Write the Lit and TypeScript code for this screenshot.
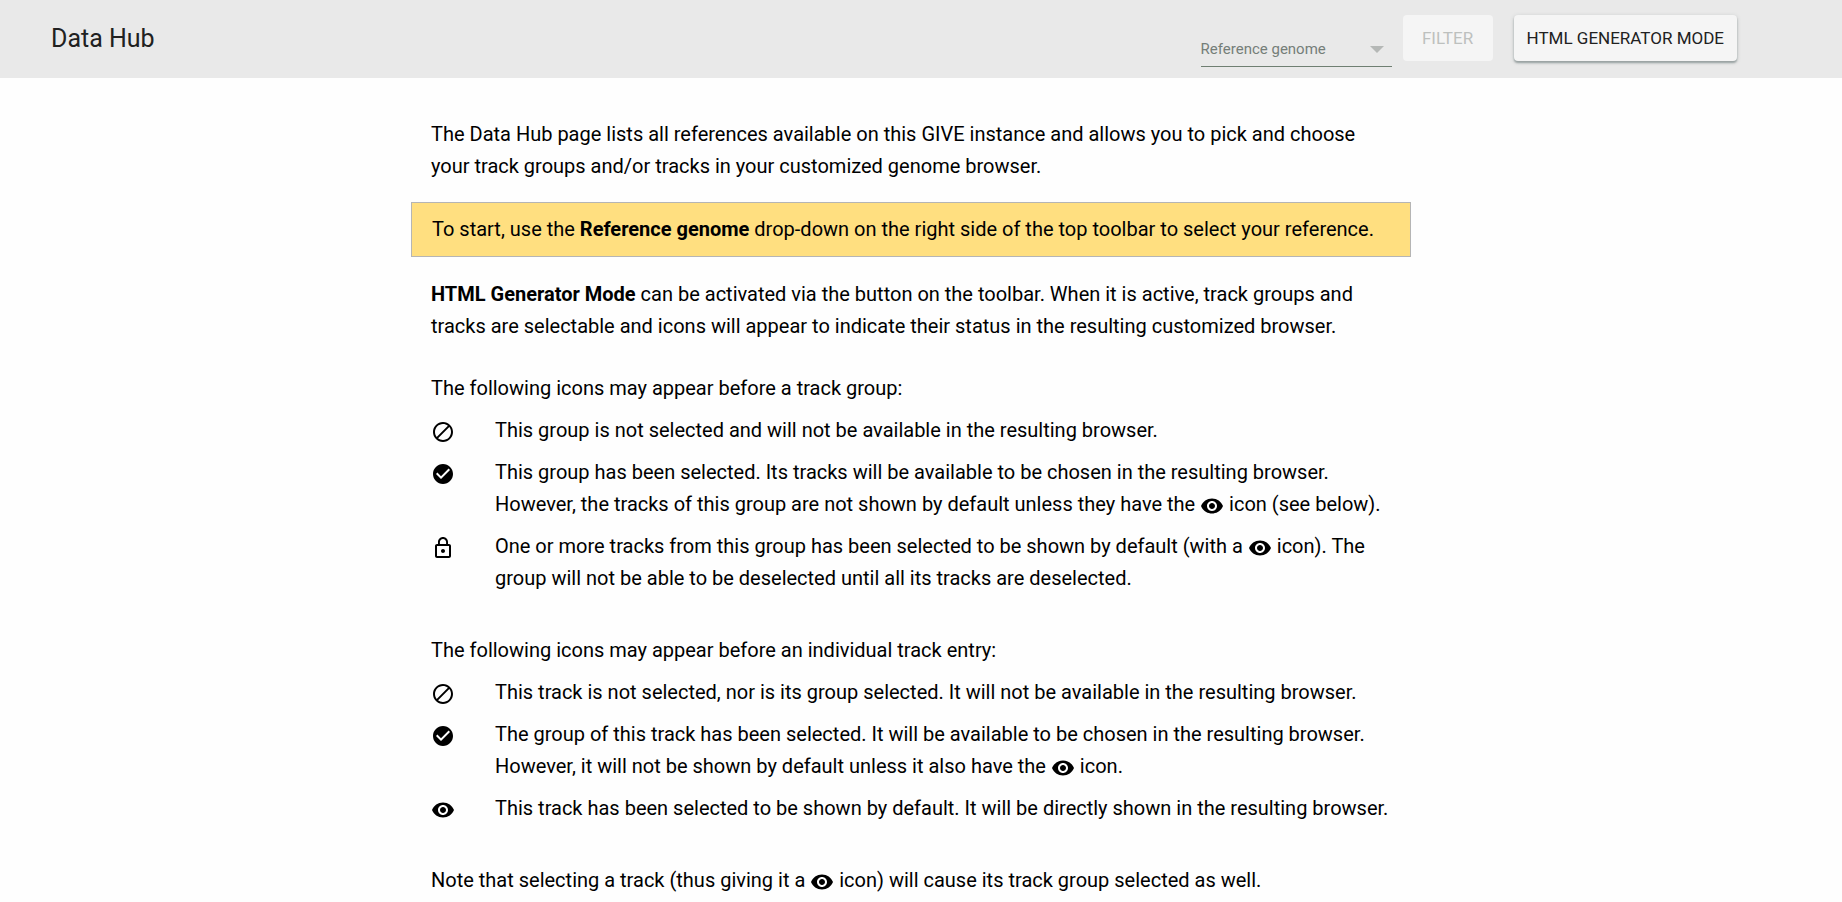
import { LitElement, html, css, svg } from "lit";
import { customElement, property } from "lit/decorators.js";

const ICONS: Record<string, string> = {
  block:
    "M12 2C6.48 2 2 6.48 2 12s4.48 10 10 10 10-4.48 10-10S17.52 2 12 2zM4 12c0-4.42 3.58-8 8-8 1.85 0 3.55.63 4.9 1.69L5.69 16.9C4.63 15.55 4 13.85 4 12zm8 8c-1.85 0-3.55-.63-4.9-1.69L18.31 7.1C19.37 8.45 20 10.15 20 12c0 4.42-3.58 8-8 8z",
  check:
    "M12 2C6.48 2 2 6.48 2 12s4.48 10 10 10 10-4.48 10-10S17.52 2 12 2zm-2 15l-5-5 1.41-1.41L10 14.17l7.59-7.59L19 8l-9 9z",
  lock:
    "M12 17c1.1 0 2-.9 2-2s-.9-2-2-2-2 .9-2 2 .9 2 2 2zm6-9h-1V6c0-2.76-2.24-5-5-5S7 3.24 7 6v2H6c-1.1 0-2 .9-2 2v10c0 1.1.9 2 2 2h12c1.1 0 2-.9 2-2V10c0-1.1-.9-2-2-2zM8.9 6c0-1.71 1.39-3.1 3.1-3.1s3.1 1.39 3.1 3.1v2H8.9V6zM18 20H6V10h12v10z",
  eye:
    "M12 4.5C7 4.5 2.73 7.61 1 12c1.73 4.39 6 7.5 11 7.5s9.27-3.11 11-7.5c-1.73-4.39-6-7.5-11-7.5zM12 17c-2.76 0-5-2.24-5-5s2.24-5 5-5 5 2.24 5 5-2.24 5-5 5zm0-8c-1.66 0-3 1.34-3 3s1.34 3 3 3 3-1.34 3-3-1.34-3-3-3z",
};

@customElement("hub-icon")
export class HubIcon extends LitElement {
  @property() name = "eye";

  static styles = css`
    :host {
      display: inline-block;
      width: 24px;
      height: 24px;
      vertical-align: middle;
    }
    .glyph {
      display: block;
      fill: currentColor;
    }
  `;

  render() {
    return html`<svg class="glyph" viewBox="0 0 24 24" width="24" height="24" aria-hidden="true">
      ${svg`<path d=${ICONS[this.name]}></path>`}
    </svg>`;
  }
}

@customElement("hub-toolbar")
export class HubToolbar extends LitElement {
  static styles = css`
    :host {
      display: block;
    }
    .bar {
      display: flex;
      align-items: center;
      box-sizing: border-box;
      min-height: 78px;
      padding: 0 105px 0 51px;
      background: #e9e9e9;
      color: #212121;
    }
    .title {
      flex: 1;
      margin: 0;
      font-size: 25px;
      font-weight: 400;
      line-height: 32px;
    }
    .picker {
      display: grid;
      align-self: flex-end;
      align-items: center;
      width: 191px;
      margin: 0 11px 11px 0;
      border-bottom: 1px solid #6f7f72;
    }
    .picker > * {
      grid-area: 1 / 1;
    }
    .select {
      appearance: none;
      width: 100%;
      height: 34px;
      padding: 0 30px 0 0;
      border: 0;
      background: transparent;
      color: inherit;
      font: inherit;
      font-size: 15px;
    }
    .label {
      color: #757e79;
      font-size: 15px;
      line-height: 20px;
      pointer-events: none;
    }
    .arrow {
      justify-self: end;
      margin-right: 8px;
      fill: #b5b8b6;
      pointer-events: none;
    }
    .actions {
      display: flex;
      gap: 21px;
      padding-bottom: 2px;
    }
    .button {
      height: 46px;
      padding: 0 13px;
      border: 0;
      border-radius: 4px;
      background: #f5f5f5;
      color: #212121;
      font: inherit;
      font-size: 17px;
      text-transform: uppercase;
      box-shadow: 0 2px 2px #9aa3a3, 0 1px 4px #c4c8c8;
    }
    .button:disabled {
      min-width: 90px;
      color: #bdc0be;
      box-shadow: none;
    }
  `;

  render() {
    return html`
      <header class="bar">
        <h1 class="title">Data Hub</h1>
        <div class="picker">
          <select class="select" id="genome">
            <option value=""></option>
          </select>
          <label class="label" for="genome">Reference genome</label>
          <svg class="arrow" width="14" height="7" viewBox="0 0 14 7" aria-hidden="true">
            <path d="M0 0h14L7 7z"></path>
          </svg>
        </div>
        <div class="actions">
          <button class="button" type="button" disabled>Filter</button>
          <button class="button" type="button">HTML Generator Mode</button>
        </div>
      </header>
    `;
  }
}

@customElement("app-root")
export class AppRoot extends LitElement {
  static styles = css`
    :host {
      display: block;
      min-height: 100vh;
      background: #fefefe;
      color: #000;
      font-family: Roboto, "Liberation Sans", sans-serif;
      font-size: 20px;
      line-height: 32px;
    }
    .content {
      display: flex;
      flex-direction: column;
      gap: 20px;
      max-width: 1000px;
      margin: 0 auto;
      padding: 40px 20px 0 0;
    }
    .text {
      margin: 0;
      padding: 0 20px;
    }
    .notice {
      margin: 0 0 1px;
      padding: 10px 20px 11px;
      border: 1px solid #b5b5b5;
      background: #ffdf80;
    }
    .legend {
      display: flex;
      flex-direction: column;
      gap: 10px;
      padding: 10px 20px;
    }
    .lead {
      margin: 0;
    }
    .items {
      display: grid;
      grid-template-columns: 64px 1fr;
      row-gap: 10px;
      margin: 0;
    }
    .items dd {
      margin: 0;
    }
    .note {
      padding-top: 10px;
    }
  `;

  render() {
    const eye = html`<hub-icon name="eye"></hub-icon>`;
    return html`
      <hub-toolbar></hub-toolbar>
      <main class="content">
        <p class="text">
          The Data Hub page lists all references available on this GIVE instance and allows you to
          pick and choose your track groups and/or tracks in your customized genome browser.
        </p>
        <p class="notice">
          To start, use the <b>Reference genome</b> drop-down on the right side of the top toolbar
          to select your reference.
        </p>
        <p class="text">
          <b>HTML Generator Mode</b> can be activated via the button on the toolbar. When it is
          active, track groups and tracks are selectable and icons will appear to indicate their
          status in the resulting customized browser.
        </p>
        <section class="legend">
          <p class="lead">The following icons may appear before a track group:</p>
          <dl class="items">
            <dt><hub-icon name="block"></hub-icon></dt>
            <dd>This group is not selected and will not be available in the resulting browser.</dd>
            <dt><hub-icon name="check"></hub-icon></dt>
            <dd>
              This group has been selected. Its tracks will be available to be chosen in the
              resulting browser. However, the tracks of this group are not shown by default unless
              they have the ${eye} icon (see below).
            </dd>
            <dt><hub-icon name="lock"></hub-icon></dt>
            <dd>
              One or more tracks from this group has been selected to be shown by default (with a
              ${eye} icon). The group will not be able to be deselected until all its tracks are
              deselected.
            </dd>
          </dl>
        </section>
        <section class="legend">
          <p class="lead">The following icons may appear before an individual track entry:</p>
          <dl class="items">
            <dt><hub-icon name="block"></hub-icon></dt>
            <dd>
              This track is not selected, nor is its group selected. It will not be available in the
              resulting browser.
            </dd>
            <dt><hub-icon name="check"></hub-icon></dt>
            <dd>
              The group of this track has been selected. It will be available to be chosen in the
              resulting browser. However, it will not be shown by default unless it also have the
              ${eye} icon.
            </dd>
            <dt><hub-icon name="eye"></hub-icon></dt>
            <dd>
              This track has been selected to be shown by default. It will be directly shown in the
              resulting browser.
            </dd>
          </dl>
        </section>
        <p class="text note">
          Note that selecting a track (thus giving it a ${eye} icon) will cause its track group
          selected as well.
        </p>
      </main>
    `;
  }
}
